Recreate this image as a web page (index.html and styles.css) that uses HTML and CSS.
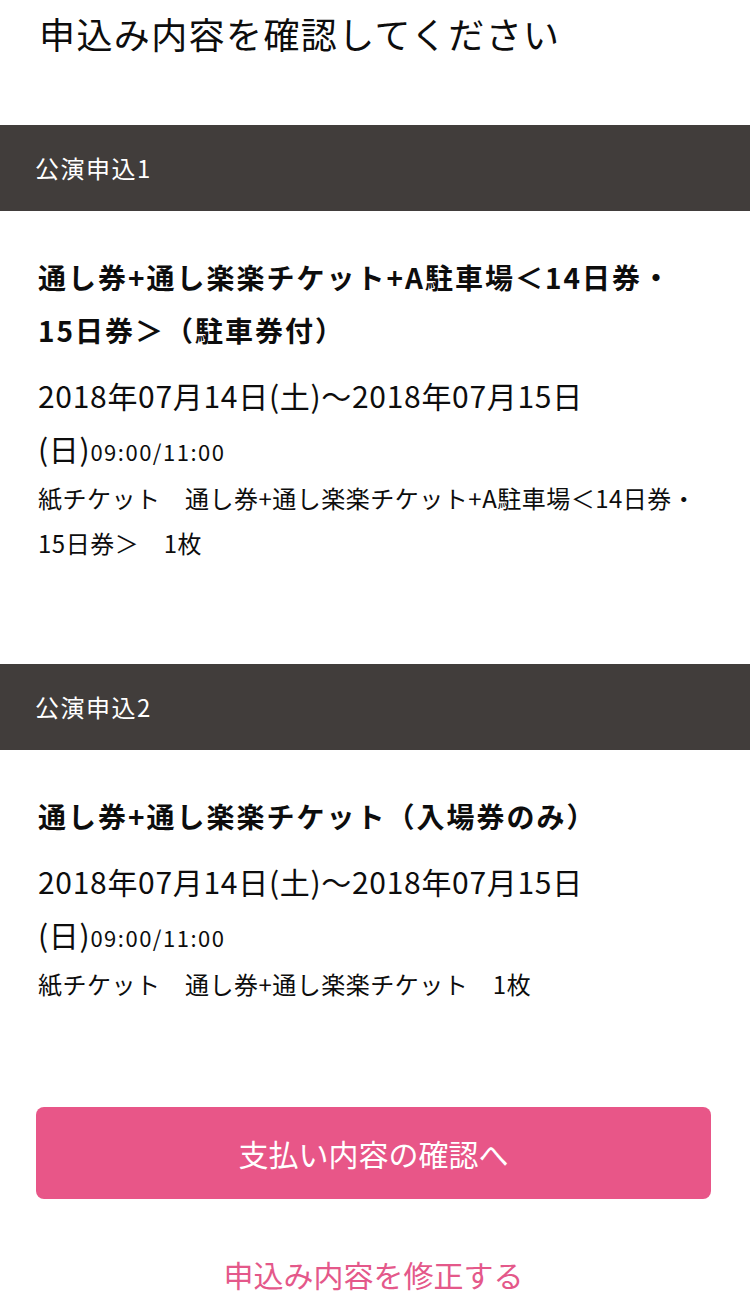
FILE: index.html
```html
<!DOCTYPE html>
<html lang="ja">
<head>
<meta charset="utf-8">
<title>申込み内容確認</title>
<link rel="stylesheet" href="styles.css">
</head>
<body>
<div class="page">
  <h1 class="page-title">申込み内容を確認してください</h1>

  <section class="entry">
    <div class="entry-bar">公演申込1</div>
    <div class="entry-body">
      <h2 class="ticket-name">通し券+通し楽楽チケット+A駐車場＜14日券・<br>15日券＞（駐車券付）</h2>
      <p class="ticket-date">2018年07月14日(土)～2018年07月15日<br>(日)<span class="ticket-time">09:00/11:00</span></p>
      <p class="ticket-detail">紙チケット　通し券+通し楽楽チケット+A駐車場＜14日券・<br>15日券＞　1枚</p>
    </div>
  </section>

  <section class="entry">
    <div class="entry-bar">公演申込2</div>
    <div class="entry-body">
      <h2 class="ticket-name">通し券+通し楽楽チケット（入場券のみ）</h2>
      <p class="ticket-date">2018年07月14日(土)～2018年07月15日<br>(日)<span class="ticket-time">09:00/11:00</span></p>
      <p class="ticket-detail">紙チケット　通し券+通し楽楽チケット　1枚</p>
    </div>
  </section>

  <div class="actions">
    <a class="btn-primary" href="#">支払い内容の確認へ</a>
    <a class="link-edit" href="#">申込み内容を修正する</a>
  </div>
</div>
</body>
</html>
```
FILE: styles.css
```css
html, body {
  margin: 0;
  padding: 0;
  background: #ffffff;
}
body {
  font-family: "Noto Sans CJK JP", "Noto Sans", sans-serif;
  color: #0d0d0d;
}
.page {
  width: 750px;
}
.page-title {
  margin: 0 0 59px 0;
  padding-left: 39px;
  font-size: 36px;
  font-weight: 400;
  line-height: 66px;
  letter-spacing: 1.4px;
}
.entry-bar {
  height: 86px;
  line-height: 86px;
  background: #413d3b;
  color: #ffffff;
  font-size: 24px;
  letter-spacing: 1.5px;
  padding-left: 35px;
}
.entry-body {
  padding: 40px 38px 99px 38px;
}
.ticket-name {
  margin: 0;
  font-size: 28px;
  font-weight: 700;
  line-height: 53px;
  letter-spacing: 2px;
}
.ticket-date {
  margin: 12px 0 0 0;
  font-size: 30px;
  line-height: 53px;
  letter-spacing: 0.7px;
}
.ticket-time {
  font-size: 22px;
  line-height: 1;
  letter-spacing: 1.5px;
}
.ticket-detail {
  margin: 0;
  font-size: 24px;
  line-height: 45px;
  letter-spacing: 0.5px;
}
.actions {
  display: flex;
  flex-direction: column;
  align-items: center;
  padding: 2px 39px 0 36px;
}
.btn-primary {
  display: flex;
  align-items: center;
  justify-content: center;
  width: 100%;
  height: 92px;
  border-radius: 8px;
  background: #e85688;
  color: #ffffff;
  font-size: 30px;
  text-decoration: none;
}
.link-edit {
  margin-top: 45px;
  line-height: 60px;
  font-size: 30px;
  color: #e4588a;
  text-decoration: none;
}
```
